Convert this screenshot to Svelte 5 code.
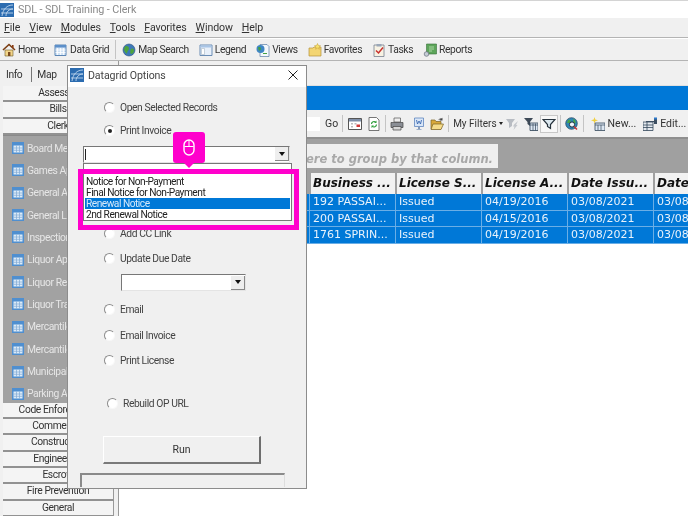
<script>
  const menus = ['File', 'View', 'Modules', 'Tools', 'Favorites', 'Window', 'Help'];
  const tools = [
    { icon: 'home', label: 'Home' },
    { icon: 'grid', label: 'Data Grid', sep: true },
    { icon: 'globe', label: 'Map Search' },
    { icon: 'legend', label: 'Legend' },
    { icon: 'views', label: 'Views' },
    { icon: 'folder', label: 'Favorites' },
    { icon: 'tasks', label: 'Tasks' },
    { icon: 'report', label: 'Reports' }
  ];
  const topSections = ['Assessor', 'Bills', 'Clerk'];
  const bottomSections = ['Code Enforcement', 'Commercial', 'Construction', 'Engineering', 'Escrow', 'Fire Prevention', 'General'];
  const clerkItems = ['Board Mem', 'Games Ap', 'General A', 'General Li', 'Inspection', 'Liquor App', 'Liquor Ren', 'Liquor Tra', 'Mercantile', 'Mercantile', 'Municipal', 'Parking Ap'];
  const columns = ['Business ...', 'License S...', 'License A...', 'Date Issu...', 'Date'];
  const rows = [
    ['192 PASSAI...', 'Issued', '04/19/2016', '03/08/2021', '03/08'],
    ['200 PASSAI...', 'Issued', '04/15/2016', '03/08/2021', '03/08'],
    ['1761 SPRIN...', 'Issued', '04/19/2016', '03/08/2021', '03/08']
  ];
  const notices = ['Notice for Non-Payment', 'Final Notice for Non-Payment', 'Renewal Notice', '2nd Renewal Notice'];
</script>

{#snippet icon(name, cls = '')}
  <svg class="ico {cls}" viewBox="0 0 14 14" width="14" height="14">
    {#if name === 'home'}
      <path d="M1 7 7 1.500 13 7" fill="none" stroke="#7a3b10" stroke-width="1.600" />
      <path d="M3 7h8v6H3z" fill="#f2d58a" stroke="#6d5a2a" stroke-width=".6" />
      <path d="M6 9h2.400v4H6z" fill="#7a4a1e" />
      <path d="M10 2h1.600v3H10z" fill="#8a3d14" />
    {:else if name === 'grid'}
      <path d="M1 2h11v10.500H1z" fill="#cfe2f5" stroke="#5c86b5" />
      <path d="M1 2h11v2.500H1z" fill="#5c8fc9" />
      <path d="M3.500 5v7M6.500 5v7M9.500 5v7M1.500 7h10M1.500 9.500h10" stroke="#fff" stroke-width=".8" />
    {:else if name === 'globe'}
      <circle cx="7" cy="7" r="6" fill="#3d78b8" stroke="#2a4f7a" stroke-width=".6" />
      <path d="M3 3.500c2-1 4 0 4 2S5 8 5 10 2 8 2 6zM9 6c2-1 3 0 3 2s-2 3-3 3-1-4 0-5z" fill="#4da33d" />
    {:else if name === 'legend'}
      <path d="M1 2h12v10.500H1z" fill="#e8f0fa" stroke="#6b8db5" />
      <path d="M1.500 2.500h11v2h-11z" fill="#a9c5e6" />
      <path d="M2.500 5.500h3v6h-3z" fill="#fff" stroke="#9ab" stroke-width=".5" />
    {:else if name === 'views'}
      <path d="M4 1.500h7l2 2v10H4z" fill="#f4f8fc" stroke="#5a7da6" stroke-width=".7" />
      <circle cx="4.500" cy="6" r="4" fill="#3f86c4" />
      <path d="M2 4.500c2-1 3 0 3 1.500s-2 1-2 2zM7 10h4v1H7z" fill="#45a142" />
    {:else if name === 'folder'}
      <path d="M1 5h4l1-1h7v9H1z" fill="#f3d572" stroke="#b6933a" stroke-width=".7" />
      <path d="m9.500 .5.900 2 2.100.2-1.600 1.400.500 2.100-1.900-1.100-1.900 1.100.5-2.100L6.500 2.700l2.100-.2z" fill="#f7e36e" stroke="#c49a2e" stroke-width=".5" />
    {:else if name === 'tasks'}
      <path d="M2 2h10v11.500H2z" fill="#f7f2e3" stroke="#77808f" stroke-width=".8" />
      <path d="M4.500 1h5v2.500h-5z" fill="#9aa7b8" />
      <path d="m4 7.500 2.500 2.500L11 4.500" fill="none" stroke="#c9302c" stroke-width="1.500" />
    {:else if name === 'report'}
      <path d="M3.500 1h10v10h-10z" fill="#5da55a" stroke="#37713a" stroke-width=".6" />
      <path d="M6 4h5M6 6h5M6 8h3" stroke="#bfe3b8" stroke-width=".8" />
      <circle cx="3.500" cy="11" r="2.300" fill="#c5ccd6" stroke="#67707c" stroke-width=".7" />
    {:else if name === 'calendar'}
      <path d="M.5 1.500h13v11H.5z" fill="#fff" stroke="#555" />
      <path d="M1 2h12v2.500H1z" fill="#7f8fa8" />
      <path d="M3 6h2v1.500H3zM3 9h2v1.500H3zM6.500 6h2v1.500h-2z" fill="#bbb" />
      <path d="M8.500 7.500H12V10H8.500z" fill="#d23b3b" />
    {:else if name === 'refresh'}
      <path d="M2 .5h7.500l2.500 2.500v10.500H2z" fill="#fff" stroke="#555" stroke-width=".8" />
      <path d="M4.500 7a2.500 2.500 0 0 1 4.300-1.700M9.500 7.500a2.500 2.500 0 0 1-4.300 1.700" fill="none" stroke="#2f9e3c" stroke-width="1.200" />
      <path d="m9.500 3.500v2.500H7zM4.500 11V8.500H7z" fill="#2f9e3c" />
    {:else if name === 'print'}
      <path d="M4 1h6.500v4H4z" fill="#eee" stroke="#555" stroke-width=".7" />
      <path d="M1 5.500h12v5H1z" fill="#8b8f96" stroke="#444" stroke-width=".7" />
      <path d="M3 9.500h8v3.500H3z" fill="#d8d8d8" stroke="#444" stroke-width=".7" />
    {:else if name === 'word'}
      <path d="M2.500 1h9v8.500h-9z" fill="#d9e6f7" stroke="#4e78b8" stroke-width=".7" />
      <path d="m4.500 3 1 4 1.500-3 1.500 3 1-4" fill="none" stroke="#2a5cab" stroke-width=".8" />
      <path d="M6.500 10h1v2h-1zM4.500 12.500h5" stroke="#8aa2c4" stroke-width=".8" />
    {:else if name === 'open'}
      <path d="M1 3h4l1 1.500h5V12H1z" fill="#d9a93a" stroke="#7a6125" stroke-width=".7" />
      <path d="M3 7h10.500L11 12.500H1z" fill="#f5dc8a" stroke="#7a6125" stroke-width=".7" />
      <path d="M8 3.500c1-2 3-2.500 4-2l.5-1v3h-3l1-1c-1 0-2 .2-2.500 1z" fill="#444" />
    {:else if name === 'filtergray'}
      <path d="M1 2h9L7 6v3L4 11V6z" fill="#b8bcc2" />
      <path d="M9 7.500 13 4l-2 4 1.500 0L8.500 13l1-3.500H8z" fill="#c4c7cc" />
    {:else if name === 'filtergrid'}
      <path d="M0 1h9L6 5v4L3.500 7V5z" fill="#3e4a57" />
      <path d="M6 6h8v7.500H6z" fill="#dfe8f3" stroke="#2f4256" stroke-width=".8" />
      <path d="M6 8h8M9 6.500v7M11.500 6.500v7" stroke="#2f4256" stroke-width=".7" />
    {:else if name === 'filter'}
      <path d="M1 2.500h12L8.500 7.500v4L5.500 9.500v-2z" fill="#dbe7ee" stroke="#26323c" stroke-width="1.200" />
    {:else if name === 'search'}
      <circle cx="6.500" cy="6.500" r="5.800" fill="#2f87b5" stroke="#1e3f5c" stroke-width=".7" />
      <path d="M3 3c2-1 3 .5 2.500 2S3 6 2 6zM8 2c2 .5 3 2 2.500 4S8 5 8 2z" fill="#49a548" />
      <circle cx="7" cy="7.500" r="2.600" fill="#eef5fb" stroke="#1f3345" />
      <path d="m9 9.500 3 3" stroke="#c33" stroke-width="1.600" />
    {:else if name === 'new'}
      <path d="m3.500 0 .8 2.500L7 3.300l-2.700.9-.8 2.500-.8-2.500L0 3.300l2.700-.8z" fill="#f0cf3e" />
      <path d="M4 6h10v7.500H4z" fill="#dde7f2" stroke="#33475b" stroke-width=".8" />
      <path d="M4 8h10M7 8v5M10 8v5" stroke="#33475b" stroke-width=".7" />
    {:else if name === 'edit'}
      <path d="M0 5h10v8.500H0z" fill="#e4e9ef" stroke="#33475b" stroke-width=".8" />
      <path d="M0 8h10M0 10.500h10M4 5v8.500" stroke="#33475b" stroke-width=".8" />
      <path d="M3 4h8V1h3v6h-3V5H3z" fill="#3d4f62" />
      <path d="M11 .5h3v2h-3z" fill="#2b77c9" />
    {/if}
  </svg>
{/snippet}

{#snippet radio(label, checked = false, cls = '')}
  <div class="opt {cls}">
    <span class="radio" class:checked></span>
    <span>{label}</span>
  </div>
{/snippet}

{#snippet logo()}
  <svg class="ico" viewBox="0 0 14 14" width="14" height="14">
    <path d="M0 0h14v14H0z" fill="#2c6cb0" />
    <path d="M2 13C3 6 7 2 13 2M6 13C6 9 9 6 13 6M1 6h12M1 10h12" fill="none" stroke="#cfe2f5" stroke-width=".8" />
  </svg>
{/snippet}

<div class="app">
  <header class="titlebar">
    {@render logo()}
    <span>SDL - SDL Training - Clerk</span>
  </header>

  <nav class="menubar">
    {#each menus as m}
      <span class="menu"><u>{m[0]}</u>{m.slice(1)}</span>
    {/each}
  </nav>

  <div class="toolbar">
    {#each tools as t}
      <span class="tool">{@render icon(t.icon)}{t.label}</span>
      {#if t.sep}<span class="sep"></span>{/if}
    {/each}
  </div>

  <div class="main">
    <aside class="side">
      <div class="tabs">
        <span class="tab first">Info</span>
        <span class="tab">Map</span>
      </div>
      {#each topSections as s}
        <div class="section">{s}</div>
      {/each}
      <ul class="items">
        {#each clerkItems as item}
          <li>
            <svg class="ico" viewBox="0 0 12 12" width="12" height="12">
              <path d="M0 0h12v12H0z" fill="#4f8fd0" />
              <path d="M1.500 3.500h9v7h-9z" fill="#dcebf8" />
              <path d="M4.500 3.500v7M7.500 3.500v7M1.500 6h9M1.500 8.300h9" stroke="#7fa9d4" stroke-width=".7" />
            </svg>
            <span>{item}</span>
          </li>
        {/each}
      </ul>
      {#each bottomSections as s}
        <div class="section">{s}</div>
      {/each}
    </aside>

    <section class="content">
      <div class="tabstrip"></div>
      <div class="band"></div>
      <div class="gridbar">
        <span class="search"></span>
        <span class="go">Go</span>
        <span class="sep"></span>
        {@render icon('calendar', 'ml1')}
        {@render icon('refresh', 'ml1')}
        <span class="sep"></span>
        {@render icon('print')}
        {@render icon('word', 'ml4')}
        {@render icon('open')}
        <span class="sep"></span>
        <span class="filters">My Filters <i class="caret"></i></span>
        {@render icon('filtergray')}
        {@render icon('filtergrid', 'ml1')}
        <span class="active">{@render icon('filter')}</span>
        <span class="sep"></span>
        {@render icon('search')}
        <span class="sep"></span>
        <span class="bartool">{@render icon('new')}New...</span>
        <span class="bartool">{@render icon('edit')}Edit...</span>
      </div>
      <div class="grouparea">
        <div class="grouphint">Drag a column header here to group by that column.</div>
      </div>
      <div class="table">
        <div class="row head">
          <div class="lead"></div>
          {#each columns as c}<div class="cell">{c}</div>{/each}
        </div>
        {#each rows as r}
          <div class="row sel">
            <div class="lead"></div>
            {#each r as v}<div class="cell">{v}</div>{/each}
          </div>
        {/each}
      </div>
    </section>
  </div>

  <div class="dialog">
    <div class="dlgtitle">
      {@render logo()}
      <span>Datagrid Options</span>
      <svg class="close" viewBox="0 0 10 10" width="10" height="10">
        <path d="m.5.5 9 9m0-9-9 9" stroke="#222" fill="none" />
      </svg>
    </div>
    <div class="dlgbody">
      {@render radio('Open Selected Records', false, 'm14')}
      {@render radio('Print Invoice', true, 'm9')}
      <div class="combo wide"><i class="cursor"></i><span class="drop"><i class="arrow"></i></span></div>
      {@render radio('Add CC Link', false, 'addcc')}
      {@render radio('Update Due Date', false, 'm11')}
      <div class="combo short"><span class="drop"><i class="arrow"></i></span></div>
      {@render radio('Email', false, 'm12')}
      {@render radio('Email Invoice', false, 'm12')}
      {@render radio('Print License', false, 'm11')}
      {@render radio('Rebuild OP URL', false, 'rebuild')}
      <button class="run">Run</button>
      <div class="status"></div>
    </div>

    <div class="list">
      {#each notices as n, i}
        <div class="notice" class:on={i === 2}>{n}</div>
      {/each}
    </div>
    <div class="callout"></div>
    <div class="bubble">
      <svg viewBox="0 0 12 17" width="12" height="17">
        <rect x="1" y="1" width="10" height="15" rx="5" fill="none" stroke="#fff" stroke-width="1.400" />
        <path d="M1.500 7.500h9M6 1v6.500" stroke="#fff" stroke-width="1" />
      </svg>
    </div>
  </div>
</div>

<style>
  :global(body) {
    margin: 0;
    background: #fff;
  }

  .app {
    position: relative;
    width: 688px;
    height: 516px;
    overflow: hidden;
    background: #fff;
    color: #333;
    font-family: Roboto, "Noto Sans", sans-serif;
    font-size: 10.300px;
    letter-spacing: -0.4px;
    filter: blur(0.35px);
  }

  .ico {
    flex: none;
  }

  .ml1 {
    margin-left: 1px;
  }

  .ml4 {
    margin-left: 4px;
  }

  .titlebar {
    height: 17px;
    border-top: 1px solid #d4d4d4;
    display: flex;
    align-items: center;
    gap: 4px;
    color: #8a8a8a;
    font-size: 10.800px;
    letter-spacing: -0.1px;
    background: #fff;
  }

  .menubar {
    height: 19px;
    background: #f0f0f0;
    border-bottom: 1px solid #b4b4b4;
    display: flex;
    align-items: center;
    gap: 9px;
    padding-left: 4px;
    font-size: 10.600px;
    letter-spacing: -0.1px;
    color: #333;
  }

  .toolbar {
    height: 21px;
    background: #f0f0f0;
    border-bottom: 1px solid #b4b4b4;
    margin-top: 1px;
    display: flex;
    align-items: center;
    gap: 10px;
    padding-left: 2px;
  }

  .tool {
    display: flex;
    align-items: center;
    gap: 2px;
    white-space: nowrap;
  }

  .toolbar .sep {
    margin: 0 -4px;
  }

  .sep {
    width: 1px;
    height: 19px;
    background: #c4c4c4;
    flex: none;
  }

  .main {
    display: flex;
    height: 456px;
  }

  .side {
    width: 118px;
    flex: none;
    background: #f0f0f0;
    padding-left: 3px;
    box-sizing: border-box;
    overflow: hidden;
  }

  .tabs {
    height: 25px;
    display: flex;
    align-items: center;
    padding-top: 1px;
    box-sizing: border-box;
  }

  .tab {
    padding: 1px 7px 1px 5px;
  }

  .tab.first {
    border-right: 1px solid #777;
    padding: 1px 9px 1px 3px;
  }

  .section {
    height: 14.300px;
    width: 110px;
    box-sizing: content-box;
    line-height: 14px;
    text-align: center;
    white-space: nowrap;
    background: #f4f4f4;
    border-bottom: 2px solid #929292;
    border-right: 1px solid #999;
  }

  .items {
    list-style: none;
    margin: 0;
    padding: 1px 0 0 9px;
    width: 112px;
    height: 268px;
    box-sizing: border-box;
    background: #a2a2a2;
    color: #e6e6e6;
    border-top: 1px solid #8a8a8a;
  }

  .items li {
    height: 22.350px;
    display: flex;
    align-items: center;
    gap: 3px;
    white-space: nowrap;
  }

  .content {
    flex: 1;
    min-width: 0;
    overflow: hidden;
    border-left: 1px solid #999;
  }

  .tabstrip {
    height: 25px;
    background: #f0f0f0;
    border-bottom: 1px solid #e0e0e0;
    box-sizing: border-box;
  }

  .band {
    height: 24px;
    background: #0078d7;
  }

  .gridbar {
    height: 29px;
    background: #f0f0f0;
    border-bottom: 2px solid #8f8f8f;
    box-sizing: border-box;
    display: flex;
    align-items: center;
    gap: 4px;
    padding-left: 182px;
    white-space: nowrap;
    font-size: 10.500px;
    letter-spacing: 0;
  }

  .gridbar .sep {
    height: 17px;
  }

  .search {
    width: 19px;
    height: 14px;
    background: #fff;
    flex: none;
  }

  .go {
    margin-left: 1px;
  }

  .filters {
    display: flex;
    align-items: center;
    gap: 2px;
    font-size: 10px;
    margin-right: -2px;
  }

  .caret {
    width: 0;
    height: 0;
    border: 2.500px solid transparent;
    border-top: 3px solid #222;
    border-bottom: 0;
  }

  .active {
    display: flex;
    padding: 1px 1px;
    margin: 0 -2px;
    background: #f8f8f8;
    border: 1px solid #c8c8c8;
  }

  .bartool {
    display: flex;
    align-items: center;
    gap: 3px;
    margin-left: 3px;
  }

  .grouparea {
    height: 34px;
    background: #a0a0a0;
    padding: 5px 0 0 3px;
    box-sizing: border-box;
  }

  .grouphint {
    width: 376px;
    height: 24px;
    box-sizing: border-box;
    background: #efefef;
    color: #a8a8a8;
    font-family: "DejaVu Sans", sans-serif;
    font-style: italic;
    font-weight: bold;
    font-size: 11.500px;
    letter-spacing: 0;
    padding: 7px 5px 0 0;
    line-height: 17px;
    white-space: nowrap;
    display: flex;
    justify-content: flex-end;
  }

  .table {
    font-family: "DejaVu Sans", sans-serif;
    font-size: 11px;
    letter-spacing: 0;
    background: #fff;
  }

  .row {
    display: flex;
    white-space: nowrap;
  }

  .lead {
    width: 190px;
    flex: none;
  }

  .cell {
    width: 86px;
    flex: none;
    box-sizing: border-box;
    overflow: hidden;
  }

  .head {
    height: 21px;
    background: #a0a0a0;
  }

  .head .cell {
    background: #f2f2f2;
    border-left: 2px solid #a0a0a0;
    color: #111;
    font-size: 12px;
    font-weight: bold;
    font-style: italic;
    line-height: 21px;
    padding-left: 2px;
  }

  .sel {
    height: 16.500px;
    background: #0078d7;
    color: #e8f2fb;
    line-height: 16px;
    border-bottom: 1px solid #6aaee6;
    box-sizing: border-box;
  }

  .sel .cell {
    border-left: 1px solid #6aaee6;
    padding-left: 3px;
  }

  .dialog {
    position: absolute;
    left: 67px;
    top: 65px;
    width: 240px;
    height: 424px;
    box-sizing: border-box;
    background: #f0f0f0;
    border: 1px solid #8c8c8c;
    color: #444;
    font-size: 10.300px;
    letter-spacing: -0.42px;
  }

  .dlgtitle {
    height: 21px;
    box-sizing: border-box;
    background: #fff;
    display: flex;
    align-items: center;
    gap: 4px;
    padding: 0 8px 3px 2px;
    color: #444;
    font-size: 10.600px;
    letter-spacing: -0.1px;
  }

  .close {
    margin-left: auto;
  }

  .dlgbody {
    display: flex;
    flex-direction: column;
    height: 400px;
  }

  .opt {
    height: 14px;
    display: flex;
    align-items: center;
    gap: 5px;
    padding-left: 36px;
  }

  .m9 {
    margin-top: 9px;
  }

  .m11 {
    margin-top: 11px;
  }

  .m12 {
    margin-top: 12px;
  }

  .m14 {
    margin-top: 14px;
  }

  .addcc {
    margin-top: 64px;
  }

  .rebuild {
    margin-top: 29px;
    padding-left: 39px;
  }

  .radio {
    width: 9px;
    height: 9px;
    border-radius: 50%;
    background: #fff;
    border: 1px solid;
    border-color: #8c8c8c #f8f8f8 #f8f8f8 #8c8c8c;
    display: flex;
    align-items: center;
    justify-content: center;
    flex: none;
  }

  .radio.checked::after {
    content: "";
    width: 4px;
    height: 4px;
    border-radius: 50%;
    background: #222;
  }

  .combo {
    position: relative;
    height: 17px;
    box-sizing: border-box;
    background: #fff;
    border: 1px solid;
    border-color: #777 #e4e4e4 #e4e4e4 #777;
    display: flex;
    justify-content: flex-end;
    align-items: center;
  }

  .wide {
    width: 207px;
    margin: 8px 0 0 15px;
  }

  .short {
    width: 125px;
    margin: 9px 0 0 53px;
  }

  .cursor {
    position: absolute;
    left: 1px;
    top: 2px;
    width: 1px;
    height: 11px;
    background: #222;
  }

  .drop {
    width: 14px;
    height: 14px;
    background: #eee;
    border-right: 1px solid #888;
    border-bottom: 1px solid #888;
    display: flex;
    align-items: center;
    justify-content: center;
    box-sizing: border-box;
  }

  .arrow {
    width: 0;
    height: 0;
    border: 3.500px solid transparent;
    border-top: 4px solid #111;
    border-bottom: 0;
  }

  .run {
    margin: 26px 0 0 35px;
    width: 158px;
    height: 28px;
    padding: 0;
    background: #f0f0f0;
    border: 1px solid;
    border-color: #fff #6e6e6e #7a7a7a #fff;
    border-width: 1px 2px 2px 1px;
    color: #333;
    font: inherit;
    font-size: 10.500px;
  }

  .status {
    margin: 9px 0 0 12px;
    width: 205px;
    height: 14px;
    border: 1px solid;
    border-color: #8a8a8a #ddd transparent #8a8a8a;
    border-width: 2px 1px 0 2px;
    box-sizing: border-box;
  }

  .list {
    position: absolute;
    left: 15px;
    top: 97px;
    width: 209px;
    height: 58px;
    box-sizing: border-box;
    background: #fff;
    border: 1px solid #777;
    padding: 12px 1px 0;
    color: #222;
    font-size: 10.200px;
    letter-spacing: -0.5px;
    line-height: 11px;
  }

  .notice {
    height: 11px;
    white-space: nowrap;
    padding-left: 1px;
  }

  .notice.on {
    background: #0078d7;
    color: #d6e9fa;
  }

  .callout {
    position: absolute;
    left: 10px;
    top: 103px;
    width: 221px;
    height: 61px;
    box-sizing: border-box;
    border: 5px solid #ff00cc;
  }

  .bubble {
    position: absolute;
    left: 105px;
    top: 66px;
    width: 32px;
    height: 31px;
    background: #ff00cc;
    border-radius: 3px;
    display: flex;
    align-items: center;
    justify-content: center;
  }

  .bubble::after {
    content: "";
    position: absolute;
    left: 11px;
    bottom: -5px;
    border: 5px solid transparent;
    border-top: 5px solid #ff00cc;
    border-bottom: 0;
  }
</style>
